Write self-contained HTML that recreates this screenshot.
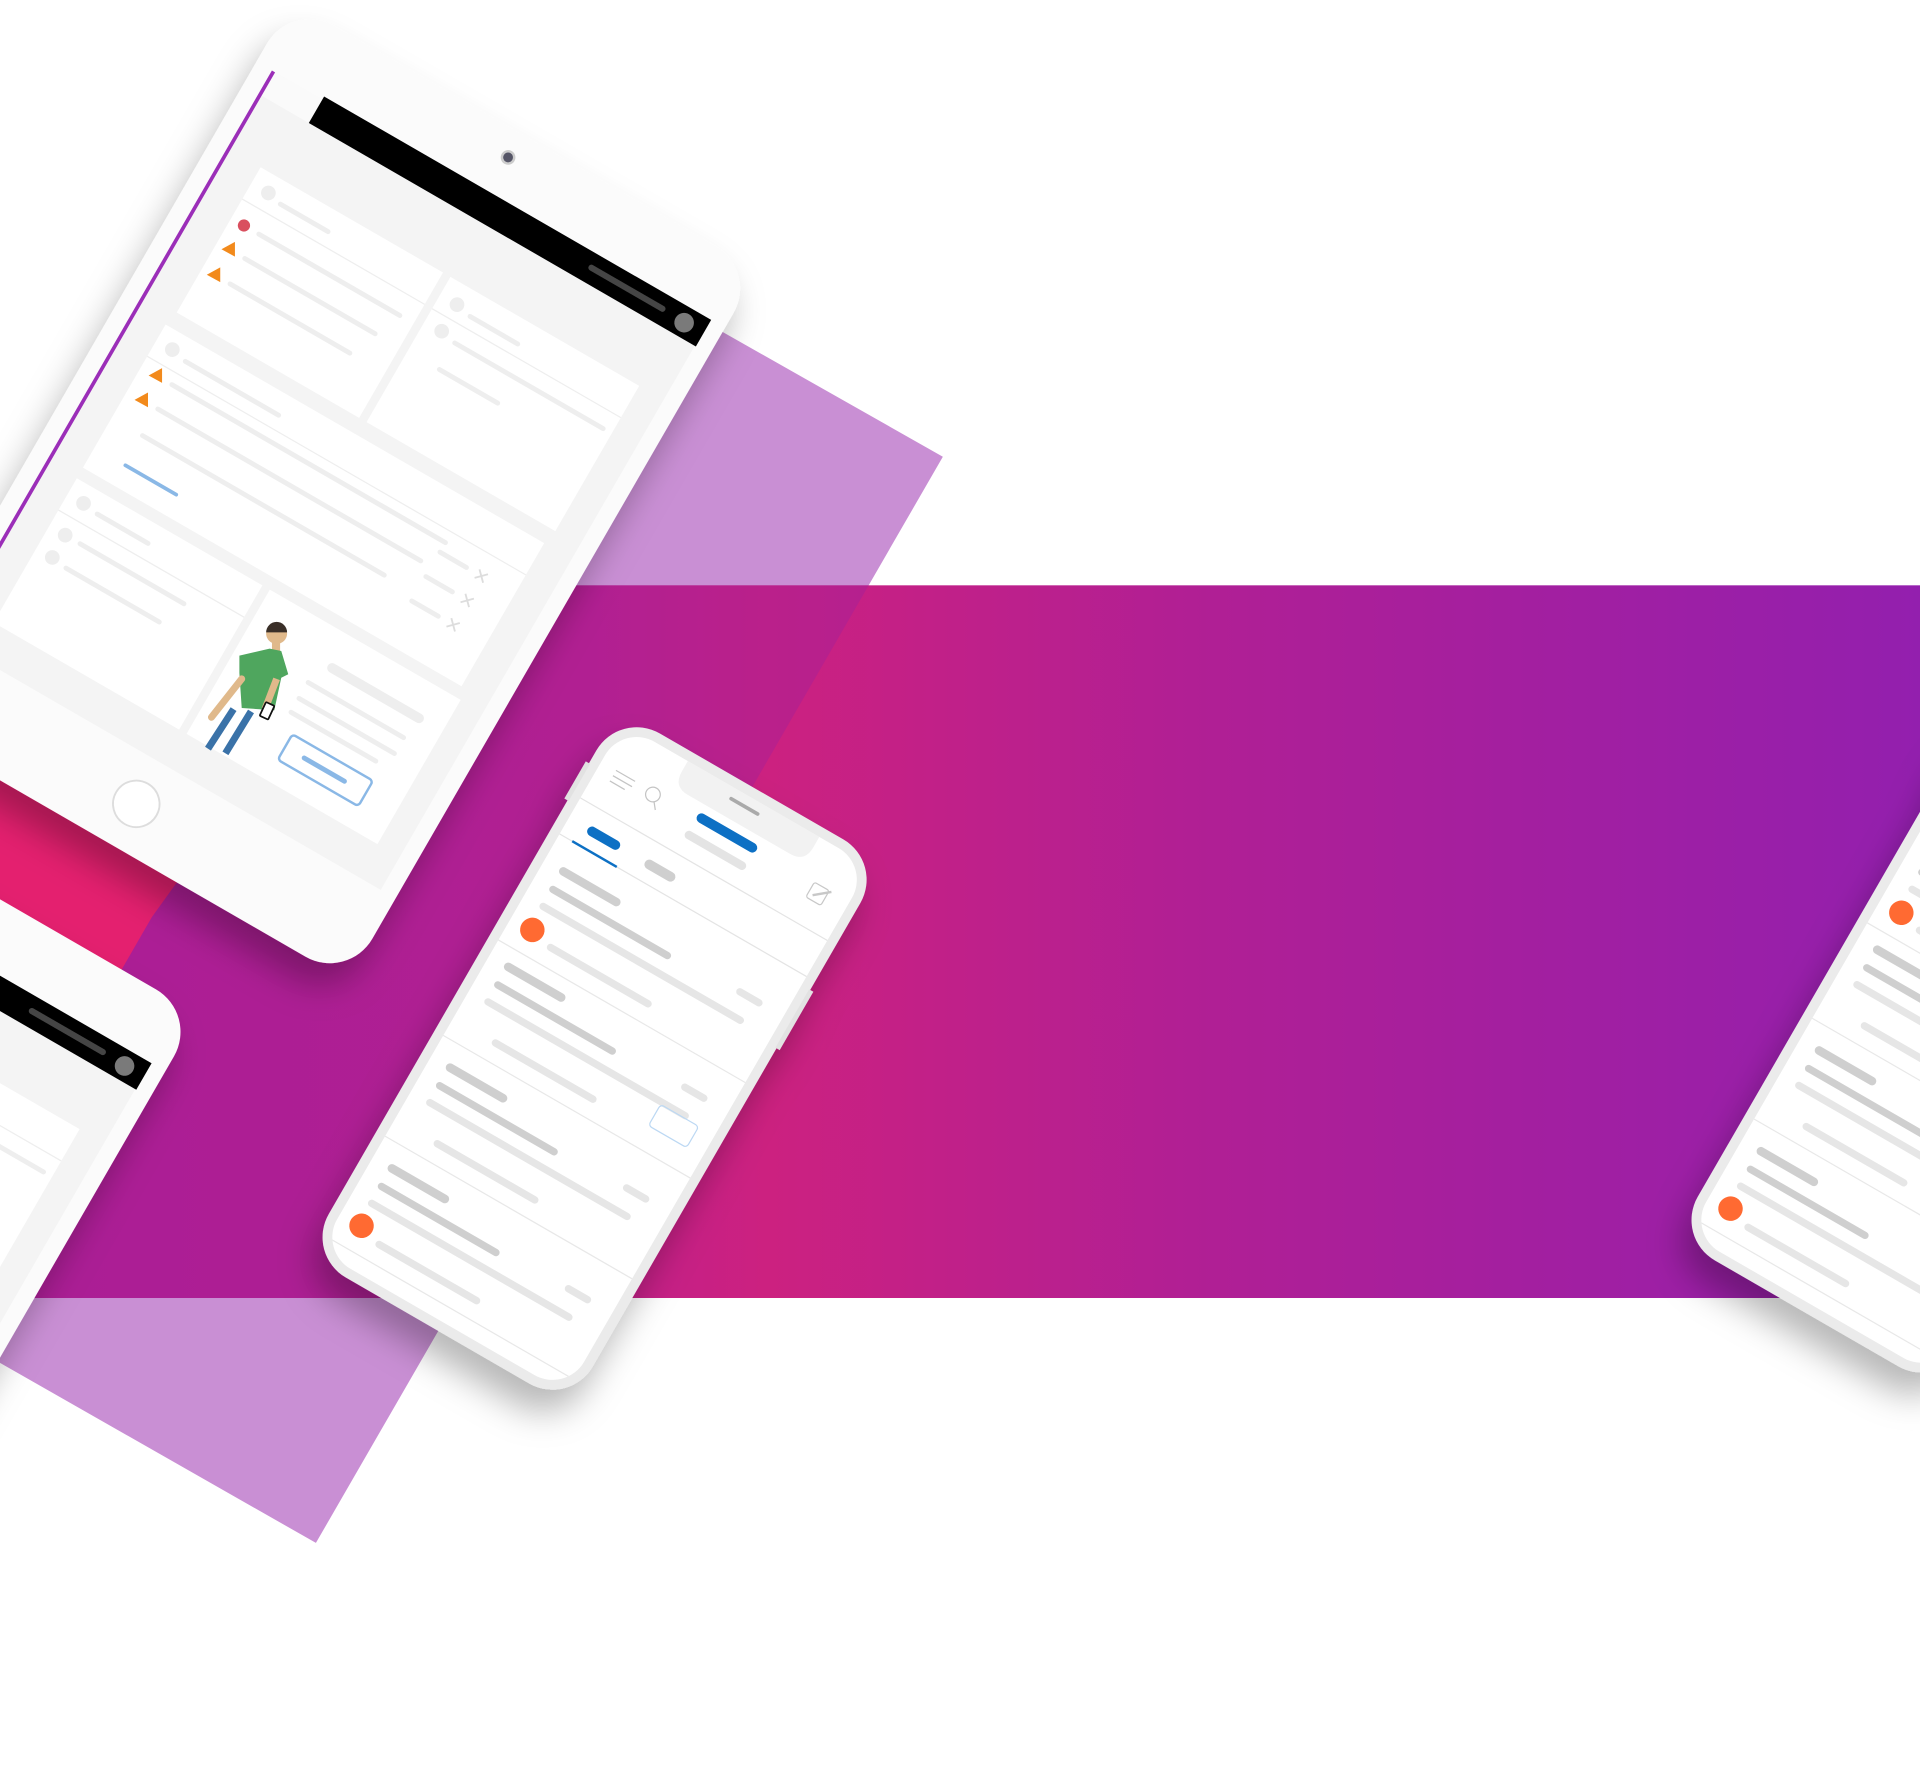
<!DOCTYPE html>
<html><head><meta charset="utf-8"><style>html,body{margin:0;padding:0;background:#fff;overflow:hidden}svg{display:block}</style></head>
<body>
<svg width="1920" height="1767" viewBox="0 0 1568 1443" preserveAspectRatio="none" xmlns="http://www.w3.org/2000/svg">
<defs>
<linearGradient id="band" x1="0" y1="0" x2="1568" y2="0" gradientUnits="userSpaceOnUse">
<stop offset="0" stop-color="#b81e8e"/><stop offset="0.3" stop-color="#c01f8a"/><stop offset="0.4" stop-color="#cc2180"/><stop offset="0.62" stop-color="#b11f94"/><stop offset="1" stop-color="#931fae"/>
</linearGradient>
<clipPath id="para"><polygon points="770,373 258,1260 0,1113 0,500 300,100 500,220"/></clipPath>
<filter id="sh" x="-30%" y="-30%" width="160%" height="160%"><feDropShadow dx="-8" dy="18" stdDeviation="14" flood-color="#000" flood-opacity="0.28"/></filter>
<clipPath id="pscr"><rect x="8" y="8" width="233" height="497" rx="30"/></clipPath>
<g id="tab">
<rect x="0" y="0" width="440" height="670" rx="40" fill="#fbfbfb"/>
<circle cx="217" cy="22" r="5" fill="#556" stroke="#ccc" stroke-width="2"/>
<rect x="16" y="57" width="410" height="535" fill="#f4f4f4"/>
<rect x="16" y="57" width="46" height="22" fill="#fafafa"/>
<line x1="16" y1="57" x2="16" y2="592" stroke="#9b2fb8" stroke-width="3"/>
<rect x="62" y="54" width="365" height="25" fill="#000"/>
<line x1="321" y1="66" x2="388" y2="66" stroke="#444" stroke-width="5" stroke-linecap="round"/>
<circle cx="409" cy="67" r="8" fill="#7a7a7a"/>
<g fill="#fff"><rect x="46" y="130" width="172" height="137"/><rect x="225" y="130" width="178" height="137"/><rect x="43" y="280" width="357" height="135"/><rect x="43" y="425" width="175" height="136"/><rect x="225" y="425" width="180" height="136"/></g>
<g stroke="#eee" stroke-width="1"><line x1="46" y1="160" x2="218" y2="160"/><line x1="225" y1="160" x2="403" y2="160"/><line x1="43" y1="310" x2="400" y2="310"/><line x1="43" y1="455" x2="218" y2="455"/></g>
<g fill="#eee"><circle cx="62" cy="145" r="6"/><circle cx="241" cy="147" r="6"/><circle cx="241" cy="172" r="6"/><circle cx="58" cy="295" r="6"/><circle cx="58" cy="440" r="6"/><circle cx="58" cy="470" r="6"/><circle cx="58" cy="491" r="6"/></g>
<g stroke="#eeeeee" stroke-width="4" stroke-linecap="round">
<line x1="75" y1="148" x2="120" y2="148"/><line x1="72" y1="178" x2="205" y2="178"/><line x1="72" y1="201" x2="195" y2="201"/><line x1="72" y1="225" x2="185" y2="225"/>
<line x1="255" y1="150" x2="300" y2="150"/><line x1="255" y1="175" x2="395" y2="175"/><line x1="255" y1="200" x2="310" y2="200"/>
<line x1="72" y1="298" x2="160" y2="298"/><line x1="72" y1="320" x2="330" y2="320"/><line x1="72" y1="343" x2="320" y2="343"/><line x1="72" y1="368" x2="300" y2="368"/>
<line x1="330" y1="329" x2="355" y2="329"/><line x1="330" y1="352" x2="355" y2="352"/><line x1="330" y1="375" x2="355" y2="375"/>
<line x1="72" y1="442" x2="120" y2="442"/><line x1="72" y1="470" x2="170" y2="470"/><line x1="72" y1="493" x2="160" y2="493"/>
<line x1="290" y1="475" x2="380" y2="475"/><line x1="290" y1="490" x2="380" y2="490"/><line x1="290" y1="503" x2="370" y2="503"/>
</g>
<line x1="301" y1="455" x2="383" y2="455" stroke="#eee" stroke-width="8" stroke-linecap="round"/>
<g stroke="#ddd" stroke-width="1.5"><path d="M365 325l8 8M373 325l-8 8M365 348l8 8M373 348l-8 8M365 371l8 8M373 371l-8 8"/></g>
<line x1="72" y1="396" x2="120" y2="396" stroke="#8ab8e6" stroke-width="3" stroke-linecap="round"/>
<circle cx="58" cy="178" r="5" fill="#d9505e"/>
<g fill="#f28a1c">
<polygon points="-6,0 5,-6 5,6" transform="translate(57,201) rotate(-30)"/>
<polygon points="-6,0 5,-6 5,6" transform="translate(57,225) rotate(-30)"/>
<polygon points="-6,0 5,-6 5,6" transform="translate(57,320) rotate(-30)"/>
<polygon points="-6,0 5,-6 5,6" transform="translate(57,343) rotate(-30)"/>
</g>
<rect x="300" y="518" width="76" height="24" rx="3" fill="none" stroke="#8ab8e6" stroke-width="2"/>
<line x1="318" y1="530" x2="356" y2="530" stroke="#8ab8e6" stroke-width="4" stroke-linecap="round"/>
<circle cx="218" cy="631" r="19" fill="#fff" stroke="#ddd" stroke-width="1.5"/>
</g>
<g id="phone">
<rect x="0" y="0" width="249" height="513" rx="38" fill="#ebebeb"/>
<rect x="-3" y="50" width="4" height="35" fill="#e2e2e2"/>
<rect x="248" y="120" width="4" height="55" fill="#e2e2e2"/>
<g clip-path="url(#pscr)">
<rect x="8" y="8" width="233" height="497" fill="#fff"/>
<path d="M69 0h124v18q0 14-14 14h-96q-14 0-14-14z" fill="#f2f2f2"/>
<line x1="115" y1="17" x2="140" y2="17" stroke="#aaa" stroke-width="3" stroke-linecap="round"/>
<g stroke="#c4c4c4" stroke-width="1"><line x1="22" y1="44" x2="40" y2="44"/><line x1="22" y1="49" x2="40" y2="49"/><line x1="22" y1="54" x2="36" y2="54"/></g>
<circle cx="58" cy="46" r="6" fill="none" stroke="#c4c4c4"/><line x1="62" y1="51" x2="66" y2="56" stroke="#c4c4c4"/>
<line x1="102" y1="43" x2="150" y2="43" stroke="#0a6fc4" stroke-width="8" stroke-linecap="round"/>
<line x1="100" y1="60" x2="150" y2="60" stroke="#e4e4e4" stroke-width="7" stroke-linecap="round"/>
<rect x="208" y="42" width="14" height="14" rx="2" fill="none" stroke="#c8c8c8"/><line x1="212" y1="52" x2="224" y2="42" stroke="#c8c8c8" stroke-width="2"/>
<line x1="8" y1="78" x2="241" y2="78" stroke="#e4e4e4"/>
<line x1="30" y1="97" x2="52" y2="97" stroke="#0a6fc4" stroke-width="8" stroke-linecap="round"/>
<line x1="84" y1="97" x2="104" y2="97" stroke="#cfcfcf" stroke-width="8" stroke-linecap="round"/>
<line x1="8" y1="112" x2="241" y2="112" stroke="#e4e4e4"/>
<line x1="20" y1="112" x2="62" y2="112" stroke="#0a6fc4" stroke-width="2"/>
<g id="row">
<line x1="26" y1="137" x2="76" y2="137" stroke="#cfcfcf" stroke-width="7" stroke-linecap="round"/>
<line x1="26" y1="154" x2="134" y2="154" stroke="#cfcfcf" stroke-width="6" stroke-linecap="round"/>
<line x1="26" y1="170" x2="212" y2="170" stroke="#e6e6e6" stroke-width="6" stroke-linecap="round"/>
<line x1="48" y1="196" x2="140" y2="196" stroke="#e6e6e6" stroke-width="6" stroke-linecap="round"/>
<line x1="200" y1="150" x2="218" y2="150" stroke="#e6e6e6" stroke-width="6" stroke-linecap="round"/>
<line x1="8" y1="212" x2="241" y2="212" stroke="#e8e8e8"/>
</g>
<use href="#row" transform="translate(0,90)"/>
<use href="#row" transform="translate(0,185)"/>
<use href="#row" transform="translate(0,280)"/>
<use href="#row" transform="translate(0,372)"/>
<circle cx="28" cy="191" r="10" fill="#ff6b30"/>
<circle cx="28" cy="470" r="10" fill="#ff6b30"/>
<rect x="190" y="262" width="36" height="20" rx="3" fill="none" stroke="#bcd8f3"/>
<rect x="190" y="543" width="36" height="20" rx="3" fill="none" stroke="#bcd8f3"/>
<rect x="228" y="543" width="8" height="12" rx="2" fill="#bcd8f3"/>
</g>
</g>
</defs>
<rect width="1568" height="1443" fill="#fff"/>
<polygon points="770,373 258,1260 0,1113 0,500 300,100 500,220" fill="#c98fd4"/>
<rect x="0" y="478" width="1568" height="582" fill="url(#band)"/>
<rect x="0" y="478" width="1568" height="582" fill="#7a22b0" opacity="0.22" clip-path="url(#para)"/>
<polygon points="0,560 260,560 124,749 60,860 0,860" fill="#e4206f"/>
<g filter="url(#sh)"><use href="#tab" transform="translate(-219,608) rotate(30)"/></g>
<g filter="url(#sh)"><use href="#tab" transform="translate(238,1) rotate(30)"/></g>
<g transform="translate(167,505) scale(0.95)">
<circle cx="62" cy="13" r="9" fill="#e0b98b"/><path d="M53 12a9 9 0 0 1 18 0z" fill="#3a2f28"/>
<rect x="58" y="20" width="7" height="8" fill="#e0b98b"/>
<path d="M30 32l26-6 10 2 6 20-6 3-6 28-28-2-2-30z" fill="#4fa65e"/>
<line x1="32" y1="52" x2="6" y2="85" stroke="#e0b98b" stroke-width="6" stroke-linecap="round"/>
<line x1="62" y1="52" x2="52" y2="78" stroke="#e0b98b" stroke-width="6"/>
<line x1="25" y1="78" x2="3" y2="112" stroke="#3a72a8" stroke-width="6"/>
<line x1="40" y1="80" x2="18" y2="116" stroke="#3a72a8" stroke-width="6"/>
<rect x="50" y="73" width="8" height="13" rx="1" fill="#fff" stroke="#111" stroke-width="1.5" transform="rotate(25 54 79)"/>
</g>
<g filter="url(#sh)"><use href="#phone" transform="translate(506,580) rotate(30)"/></g>
<g filter="url(#sh)"><use href="#phone" transform="translate(1624,566) rotate(30)"/></g>
</svg>
</body></html>
